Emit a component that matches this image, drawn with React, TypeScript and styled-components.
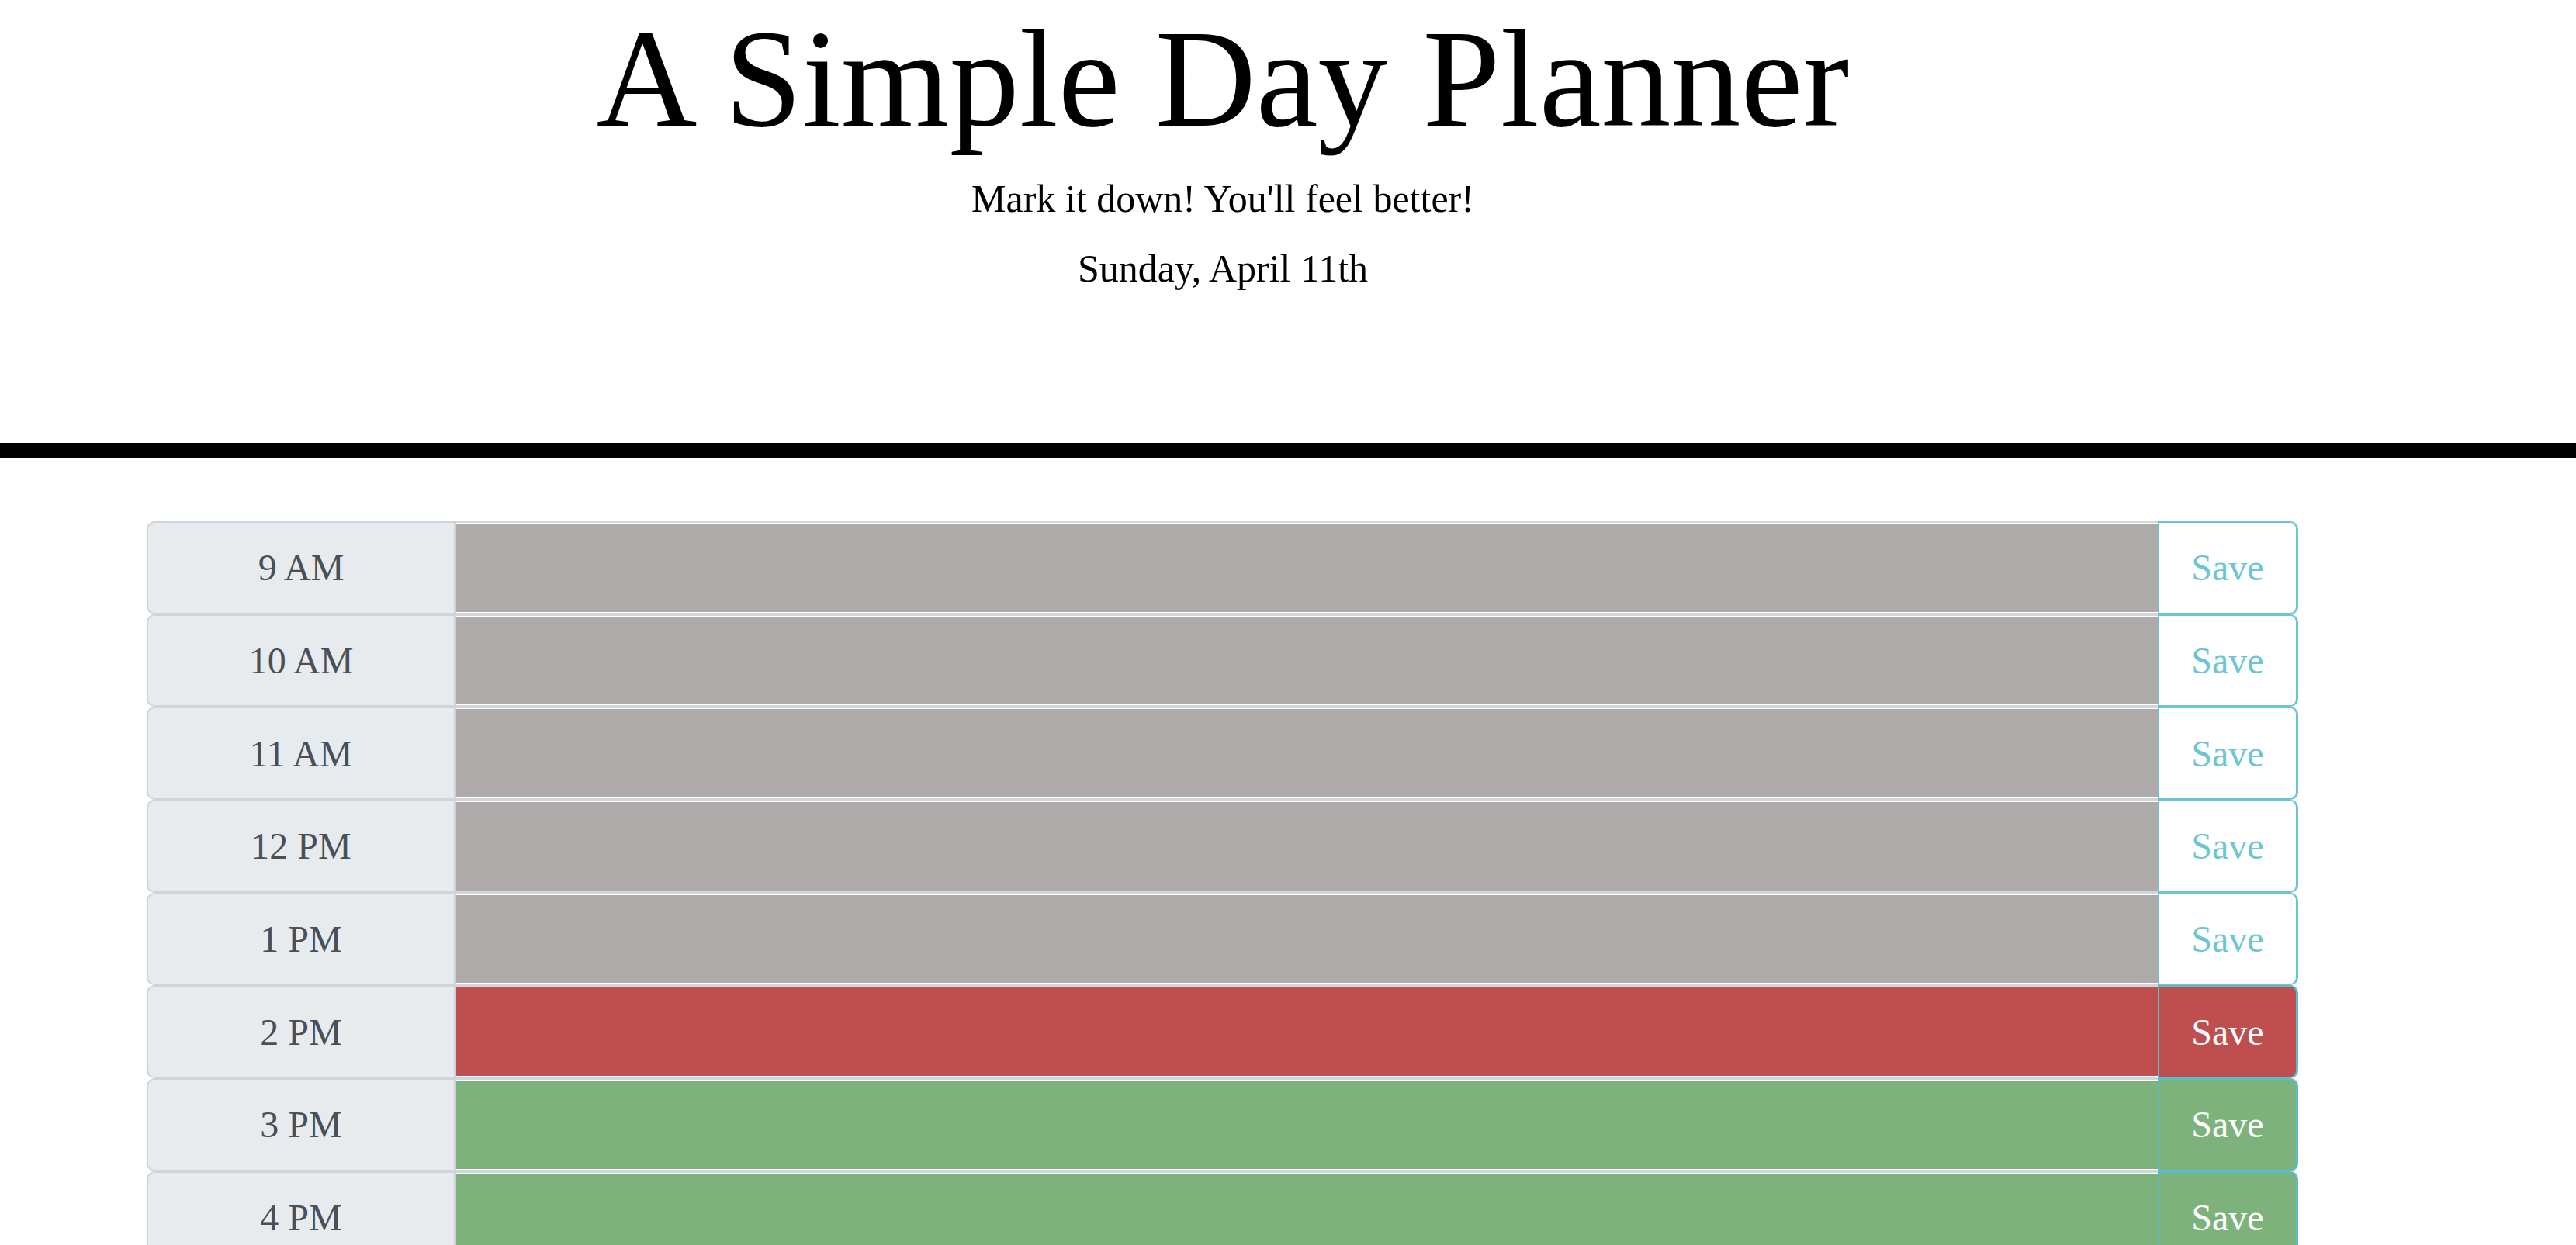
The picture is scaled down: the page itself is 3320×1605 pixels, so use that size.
import styled, { createGlobalStyle } from "styled-components";

type Status = "past" | "present" | "future";

const GlobalStyle = createGlobalStyle`
  body {
    margin: 0;
    background: #fff;
    font-family: "Liberation Serif", "Times New Roman", serif;
    color: #000;
  }
`;

const fills: Record<Status, string> = {
  past: "#afaaaa",
  present: "#bf4e4e",
  future: "#7db27c",
};

const Header = styled.header`
  padding-bottom: 195px;
  border-bottom: 20px solid #000;
`;

const HeroText = styled.div`
  width: 3152px;
  text-align: center;
`;

const Title = styled.h1`
  margin: 0;
  font-size: 180px;
  font-weight: 400;
  line-height: 204px;
`;

const Lead = styled.p<{ $gap: number }>`
  margin: ${({ $gap }) => $gap}px 0 0;
  font-size: 50px;
  line-height: 60px;
`;

const Planner = styled.main`
  width: 2773px;
  margin: 81px 0 0 189px;
`;

const TimeBlock = styled.div`
  display: flex;
  height: 119.7px;
`;

const HourLabel = styled.div`
  flex: 0 0 399px;
  box-sizing: border-box;
  display: flex;
  align-items: center;
  justify-content: center;
  background: #e8ebee;
  border: 2px solid #ced4da;
  border-right-width: 3px;
  border-radius: 10px 0 0 10px;
  color: #495057;
  font-size: 48px;
`;

const Entry = styled.textarea<{ $status: Status }>`
  flex: 1;
  box-sizing: border-box;
  margin: 0;
  padding: 10px 20px;
  border: none;
  border-top: 2px solid #d1d6db;
  border-bottom: 2px solid #d1d6db;
  box-shadow: inset 0 1px #fff, inset 0 -1px #fff;
  background: ${({ $status }) => fills[$status]};
  color: #fff;
  font-family: inherit;
  font-size: 40px;
  resize: none;
  outline: none;
`;

const SaveButton = styled.button<{ $status: Status }>`
  flex: 0 0 181px;
  box-sizing: border-box;
  margin: 0;
  padding: 0;
  border: 2px solid ${({ $status }) => ($status === "past" ? "#6cc4d1" : "#5bbccb")};
  border-right-width: 3px;
  border-radius: 0 10px 10px 0;
  background: ${({ $status }) => ($status === "past" ? "#fff" : fills[$status])};
  color: ${({ $status }) => ($status === "past" ? "#6cc5d2" : "#fff")};
  font-family: inherit;
  font-size: 48px;
  cursor: pointer;
`;

const hours: { label: string; status: Status }[] = [
  { label: "9 AM", status: "past" },
  { label: "10 AM", status: "past" },
  { label: "11 AM", status: "past" },
  { label: "12 PM", status: "past" },
  { label: "1 PM", status: "past" },
  { label: "2 PM", status: "present" },
  { label: "3 PM", status: "future" },
  { label: "4 PM", status: "future" },
  { label: "5 PM", status: "future" },
];

export default function App() {
  return (
    <>
      <GlobalStyle />
      <Header>
        <HeroText>
          <Title>A Simple Day Planner</Title>
          <Lead $gap={22}>Mark it down! You'll feel better!</Lead>
          <Lead $gap={30}>Sunday, April 11th</Lead>
        </HeroText>
      </Header>
      <Planner>
        {hours.map((h) => (
          <TimeBlock key={h.label}>
            <HourLabel>{h.label}</HourLabel>
            <Entry $status={h.status} />
            <SaveButton $status={h.status}>Save</SaveButton>
          </TimeBlock>
        ))}
      </Planner>
    </>
  );
}
